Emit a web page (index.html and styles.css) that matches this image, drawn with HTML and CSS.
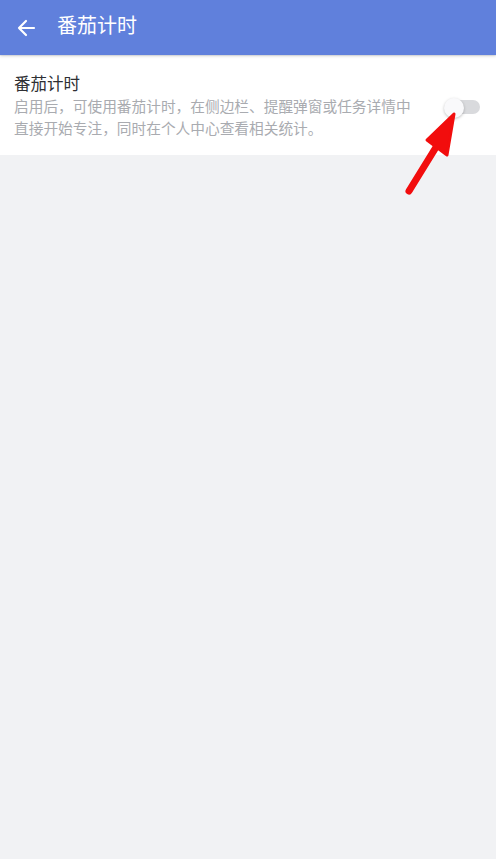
FILE: index.html
```html
<!DOCTYPE html>
<html lang="zh-CN">
<head>
    <meta charset="UTF-8">
    <meta name="viewport" content="width=device-width, initial-scale=1.0">
    <title>番茄计时</title>
    <link rel="stylesheet" href="styles.css">
</head>
<body>

<header class="topbar">
    <button class="back" aria-label="返回">
        <svg width="20" height="20" viewBox="0 0 20 20">
            <path d="M18 10H3M10 3L3 10l7 7" fill="none" stroke="#fff" stroke-width="2.2" stroke-linecap="round" stroke-linejoin="round"/>
        </svg>
    </button>
    <h1 class="title">番茄计时</h1>
</header>

<section class="card">
    <div class="setting">
        <div class="setting-text">
            <div class="setting-name">番茄计时</div>
            <div class="setting-desc">启用后，可使用番茄计时，在侧边栏、提醒弹窗或任务详情中直接开始专注，同时在个人中心查看相关统计。</div>
        </div>
        <div class="switch">
            <span class="track"></span>
            <span class="thumb"></span>
        </div>
    </div>
</section>

<!-- red pointer drawn over the page -->
<svg class="pointer" width="80" height="100" viewBox="0 0 80 100">
    <path d="M14 94L43 47" stroke="#f20d0d" stroke-width="7" stroke-linecap="round"/>
    <path d="M59 17L32 43L52 58Z" fill="#f20d0d" stroke="#f20d0d" stroke-width="3" stroke-linejoin="round"/>
</svg>

</body>
</html>
```

FILE: styles.css
```css
body {
    margin: 0;
    background-color: #f1f2f4;
    font-family: "Noto Sans CJK SC", "Noto Sans", sans-serif;
    min-height: 859px;
    position: relative;
}

.topbar {
    height: 55px;
    background-color: #6080dc;
    display: flex;
    align-items: center;
    box-shadow: 0 1px 3px rgba(0, 0, 0, 0.18);
    position: relative;
    z-index: 1;
}

.back {
    background: none;
    border: none;
    padding: 0;
    margin-left: 16px;
    width: 20px;
    height: 20px;
    display: flex;
    cursor: pointer;
}

.title {
    margin: 0 0 0 21px;
    color: #fff;
    font-size: 20px;
    font-weight: normal;
    line-height: 1;
    padding-bottom: 6px;
}

.card {
    background-color: #fff;
    margin-top: 1px;
}

.setting {
    display: flex;
    align-items: center;
    padding: 15px 16px 16px 14px;
}

.setting-text {
    flex: 1;
    min-width: 0;
}

.setting-name {
    font-size: 16.5px;
    color: #2e2f33;
    line-height: 24px;
}

.setting-desc {
    font-size: 14.7px;
    color: #a9abb0;
    line-height: 22px;
    max-width: 405px;
}

.switch {
    position: relative;
    width: 36px;
    height: 22px;
    margin-left: 8px;
    margin-top: 6px;
}

.track {
    position: absolute;
    left: 1px;
    right: 0;
    top: 3px;
    height: 14px;
    border-radius: 7px;
    background-color: #d9dadd;
}

.thumb {
    position: absolute;
    left: 0;
    top: 1px;
    width: 20px;
    height: 20px;
    border-radius: 50%;
    background-color: #f9f9fb;
    box-shadow: 0 1px 3px rgba(0, 0, 0, 0.25);
}

.pointer {
    position: absolute;
    left: 395px;
    top: 97px;
}
```
